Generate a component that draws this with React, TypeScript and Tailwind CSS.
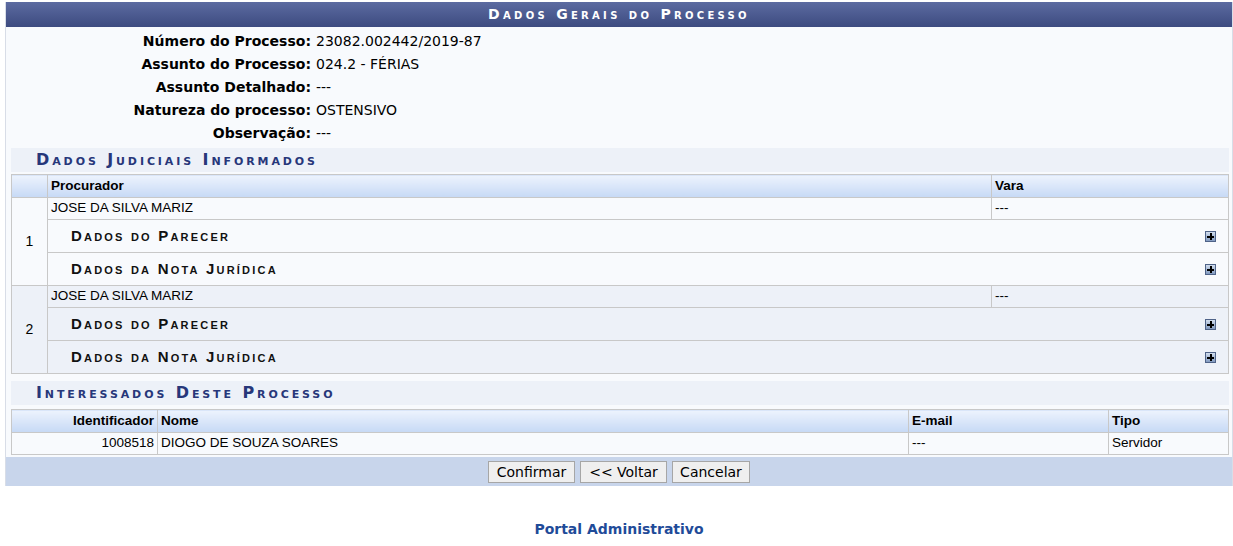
const verdana = "font-['DejaVu_Sans',Verdana,sans-serif]"
const arial = "font-['Liberation_Sans',Arial,sans-serif]"

const info = [
  ['Número do Processo:', '23082.002442/2019-87'],
  ['Assunto do Processo:', '024.2 - FÉRIAS'],
  ['Assunto Detalhado:', '---'],
  ['Natureza do processo:', 'OSTENSIVO'],
  ['Observação:', '---'],
]

const procuradores = [
  { n: '1', nome: 'JOSE DA SILVA MARIZ', vara: '---', bg: 'bg-[#f8fafd]' },
  { n: '2', nome: 'JOSE DA SILVA MARIZ', vara: '---', bg: 'bg-[#edf1f8]' },
]

const buttons = [
  { label: 'Confirmar', w: 'w-[87px]' },
  { label: '<< Voltar', w: 'w-[87px]' },
  { label: 'Cancelar', w: 'w-[78px]' },
]

const cell = 'border border-[#c8c8c8]'
const headCell = `h-[23px] px-[3px] text-left font-bold text-black ${cell} bg-gradient-to-b from-[#edf3fd] to-[#c6d9f5]`

function PlusIcon() {
  return (
    <svg width="11" height="11" viewBox="0 0 11 11" shapeRendering="crispEdges">
      <defs>
        <linearGradient id="plusBg" x1="0" y1="0" x2="0" y2="1">
          <stop offset="0" stopColor="#d6e1f0" />
          <stop offset="1" stopColor="#7d96bd" />
        </linearGradient>
      </defs>
      <rect x="0.5" y="0.5" width="10" height="10" fill="url(#plusBg)" stroke="#4f6388" />
      <rect x="5" y="2" width="1.6" height="7" fill="#000" />
      <rect x="2" y="4.9" width="7" height="1.6" fill="#000" />
    </svg>
  )
}

function SectionTitle({ children }: { children: string }) {
  return (
    <div
      className={`h-[24px] bg-[#edf1f8] pl-[25px] flex items-center text-[16px] font-bold tracking-[2.9px] text-[#27377a] [font-variant:small-caps] ${verdana}`}
    >
      {children}
    </div>
  )
}

function SubRow({ label, bg }: { label: string; bg: string }) {
  return (
    <tr className={`h-[33px] ${bg}`}>
      <td colSpan={2} className={`${cell} pl-[23px] pr-[12px]`}>
        <div className="flex items-center justify-between">
          <span className={`text-[15px] font-bold tracking-[2.2px] text-[#111] [font-variant:small-caps] ${arial}`}>
            {label}
          </span>
          <PlusIcon />
        </div>
      </td>
    </tr>
  )
}

export default function App() {
  return (
    <div className="min-h-[546px] bg-white pt-[2px] pl-[5px]">
      <div className="w-[1228px] border-x border-[#d8dde7] bg-[#f8fafd]">
        <div
          className={`h-[25px] bg-gradient-to-b from-[#5c6ba1] to-[#3d4b80] flex items-center justify-center text-white text-[14px] font-bold tracking-[3.3px] [font-variant:small-caps] ${verdana}`}
        >
          Dados Gerais do Processo
        </div>

        <div className={`pt-[3px] pb-[3px] text-[14px] text-black ${verdana}`}>
          {info.map(([label, value]) => (
            <div key={label} className="grid grid-cols-[305px_1fr] h-[23px] items-center">
              <div className="text-right font-bold">{label}</div>
              <div className="pl-[5px]">{value}</div>
            </div>
          ))}
        </div>

        <div className="pl-[5px] pr-[3px]">
          <SectionTitle>Dados Judiciais Informados</SectionTitle>
          <table className={`mt-[2px] w-full table-fixed border-collapse text-[13.5px] text-black ${arial}`}>
            <colgroup>
              <col className="w-[36px]" />
              <col />
              <col className="w-[237px]" />
            </colgroup>
            <thead>
              <tr>
                <th className={headCell}></th>
                <th className={headCell}>Procurador</th>
                <th className={headCell}>Vara</th>
              </tr>
            </thead>
            <tbody>
              {procuradores.flatMap((p) => [
                <tr key={p.n + 'a'} className={`h-[22px] ${p.bg}`}>
                  <td rowSpan={3} className={`${cell} text-center text-[14px]`}>
                    {p.n}
                  </td>
                  <td className={`${cell} px-[3px]`}>{p.nome}</td>
                  <td className={`${cell} px-[3px]`}>{p.vara}</td>
                </tr>,
                <SubRow key={p.n + 'b'} label="Dados do Parecer" bg={p.bg} />,
                <SubRow key={p.n + 'c'} label="Dados da Nota Jurídica" bg={p.bg} />,
              ])}
            </tbody>
          </table>

          <div className="mt-[7px]">
            <SectionTitle>Interessados Deste Processo</SectionTitle>
          </div>
          <table className={`mt-[4px] w-full table-fixed border-collapse text-[13.5px] text-black ${arial}`}>
            <colgroup>
              <col className="w-[146px]" />
              <col />
              <col className="w-[200px]" />
              <col className="w-[120px]" />
            </colgroup>
            <thead>
              <tr>
                <th className={`${headCell} !text-right`}>Identificador</th>
                <th className={headCell}>Nome</th>
                <th className={headCell}>E-mail</th>
                <th className={headCell}>Tipo</th>
              </tr>
            </thead>
            <tbody>
              <tr className="h-[22px] bg-[#f8fafd]">
                <td className={`${cell} px-[3px] text-right`}>1008518</td>
                <td className={`${cell} px-[3px]`}>DIOGO DE SOUZA SOARES</td>
                <td className={`${cell} px-[3px]`}>---</td>
                <td className={`${cell} px-[3px]`}>Servidor</td>
              </tr>
            </tbody>
          </table>
        </div>

        <div className={`mt-[2px] h-[29px] bg-[#c8d5eb] flex items-center justify-center gap-[5px] text-[14px] text-black ${verdana}`}>
          {buttons.map((b) => (
            <button key={b.label} className={`${b.w} h-[22px] bg-[#efefef] border border-[#a6a6a6] leading-none`}>
              {b.label}
            </button>
          ))}
        </div>
      </div>

      <div className={`mt-[33px] text-center text-[14px] font-bold text-[#1f4b99] ${verdana}`}>
        Portal Administrativo
      </div>
    </div>
  )
}
